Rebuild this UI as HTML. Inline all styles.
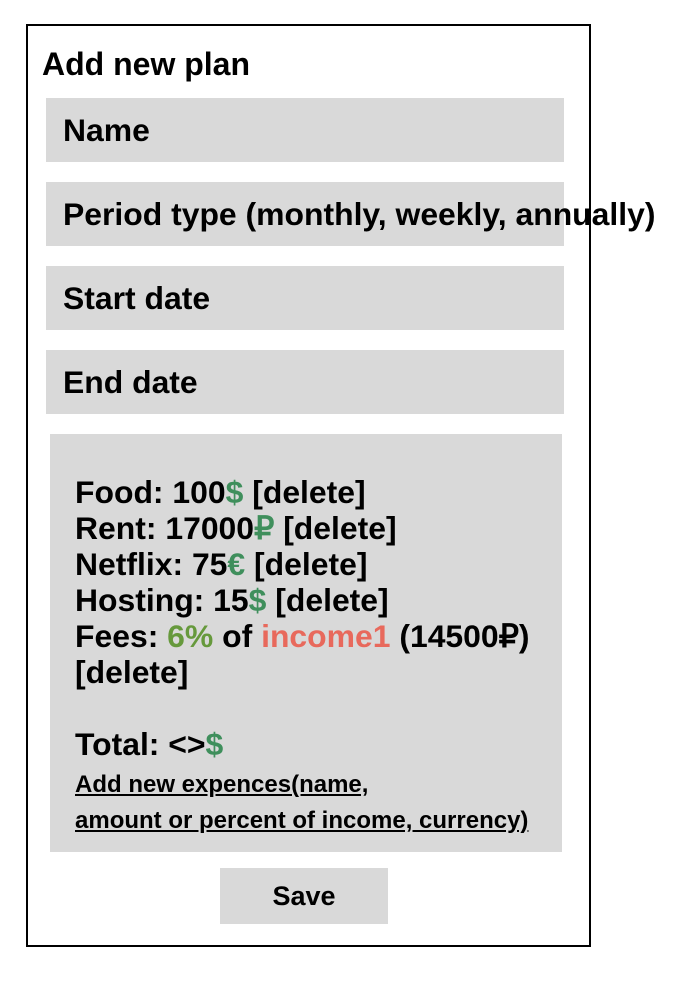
<!DOCTYPE html>
<html><head><meta charset="utf-8"><style>
body{margin:0;width:674px;height:990px;background:#fff;font-family:"Liberation Sans",sans-serif;font-weight:bold;color:#000;position:relative;overflow:hidden}
.box{position:absolute;left:26px;top:24px;width:561px;height:919px;border:2px solid #000}
.t{position:absolute;left:42px;top:46px;font-size:32px;line-height:36px;white-space:nowrap}
.in{position:absolute;left:46px;width:518px;height:64px;background:#d9d9d9;font-size:31.9px;line-height:64px;padding-left:17px;box-sizing:border-box;white-space:nowrap}
.ex{position:absolute;left:50px;top:434px;width:512px;height:418px;background:#d9d9d9;box-sizing:border-box;padding:40px 0 0 25px;font-size:31.9px;line-height:36px;white-space:nowrap}
.g{color:#3f8f5c}.o{color:#66993c}.r{color:#e8695c}
.lk{display:inline-block;font-size:24px;line-height:36px;text-decoration:underline;margin-top:5px}
.sv{position:absolute;left:220px;top:868px;width:168px;height:56px;background:#d9d9d9;text-align:center;line-height:56px;font-size:27px}
</style></head><body>
<div class="box"></div>
<div class="t">Add new plan</div>
<div class="in" style="top:98px">Name</div>
<div class="in" style="top:182px">Period type (monthly, weekly, annually)</div>
<div class="in" style="top:266px">Start date</div>
<div class="in" style="top:350px">End date</div>
<div class="ex">Food: 100<span class="g">$</span> [delete]<br>Rent: 17000<span class="g">₽</span> [delete]<br>Netflix: 75<span class="g">€</span> [delete]<br>Hosting: 15<span class="g">$</span> [delete]<br>Fees: <span class="o">6%</span> of <span class="r">income1</span> (14500₽)<br>[delete]<br><br>Total: &lt;&gt;<span class="g">$</span><br><span class="lk">Add new expences(name, <br>amount or percent of income, currency)</span></div>
<div class="sv">Save</div>
</body></html>
